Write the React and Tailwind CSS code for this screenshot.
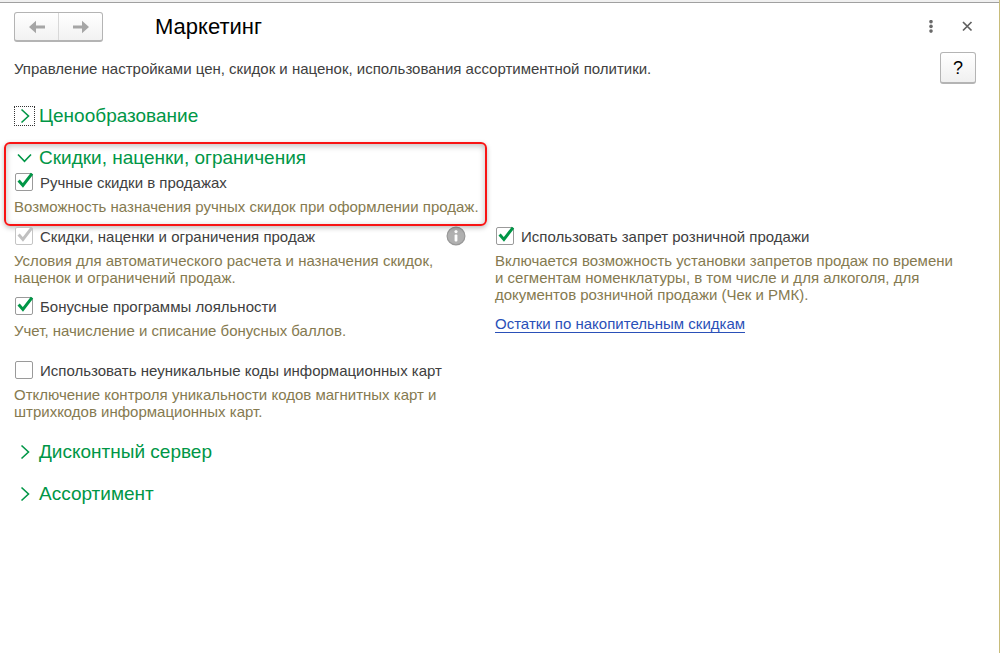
import React, { useState } from "react";

const Chevron = ({ open }) => (
  <svg width="21" height="20" viewBox="0 0 21 20" fill="none" stroke="#009646" strokeWidth="1.6" className="shrink-0">
    {open ? <path d="M4 6.5l6.5 6.8L17 6.5" /> : <path d="M7.5 3.5l7 6.5-7 6.5" />}
  </svg>
);

function SectionTitle({ title, open, focused, onClick }) {
  return (
    <h2>
      <button
        type="button"
        aria-expanded={open}
        onClick={onClick}
        className="flex h-6 items-center gap-1 text-[19px] leading-6 text-[#009646]"
      >
        <span className={focused ? "outline-1 outline-dotted outline-[#333] -outline-offset-1" : ""}>
          <Chevron open={open} />
        </span>
        {title}
      </button>
    </h2>
  );
}

function Option({ id, label, hint, checked, disabled, info, onChange }) {
  return (
    <div>
      <div className="flex h-5 items-center">
        <span className="relative ml-px h-[18px] w-[18px] shrink-0">
          <input
            id={id}
            type="checkbox"
            checked={checked}
            disabled={disabled}
            onChange={onChange}
            className="block h-[18px] w-[18px] appearance-none rounded-xs border border-[#9a9a9a] bg-white disabled:border-[#c4c4c4]"
          />
          {checked && (
            <svg
              width="18"
              height="18"
              viewBox="0 0 18 18"
              className="pointer-events-none absolute inset-0 overflow-visible"
              fill="none"
              stroke={disabled ? "#c0c0c0" : "#009646"}
              strokeWidth="3"
            >
              <path d="M3.6 7.6l4.3 4.8L17 0.6" />
            </svg>
          )}
        </span>
        <label htmlFor={id} className="ml-[7px]">{label}</label>
        {info && (
          <button type="button" aria-label="Подробнее" className="mr-[29px] ml-auto">
            <svg width="20" height="20" viewBox="0 0 20 20">
              <circle cx="10" cy="10" r="8.9" fill="#b0b0b0" stroke="#989898" strokeWidth="1.2" />
              <circle cx="10" cy="5.6" r="1.6" fill="#fff" />
              <rect x="8.6" y="8.4" width="2.8" height="7.2" rx="1" fill="#fff" />
            </svg>
          </button>
        )}
      </div>
      <p className="mt-[6px] pr-3 text-[#857a50]">{hint}</p>
    </div>
  );
}

export default function App() {
  const [sections, setSections] = useState({ pricing: false, discounts: true, server: false, range: false });
  const [options, setOptions] = useState({ manual: true, rules: true, bonus: true, codes: false, ban: true });

  const toggleSection = (name) => setSections((prev) => ({ ...prev, [name]: !prev[name] }));
  const toggleOption = (name) => setOptions((prev) => ({ ...prev, [name]: !prev[name] }));

  return (
    <div className="min-h-screen border-r border-[#c8bc7a] bg-white font-['Liberation_Sans',Arial,sans-serif] text-[15px] leading-[17px] text-[#404040]">
      <div className="h-[3px] border-b border-[#a0a0a0] bg-[#f0f0f0]" />
      <div className="pt-[9px] pr-[23px] pb-6 pl-[14px]">
        <header className="flex items-center">
          <div className="flex h-[30px] w-[89px] rounded-[3px] border border-b-2 border-[#b4b4b4] bg-linear-to-b from-white to-[#f2f2f2]">
            <button type="button" aria-label="Назад" className="flex flex-1 items-center justify-center border-r border-[#d8d8d8]">
              <svg width="18" height="14" viewBox="0 0 18 14" fill="#a6a6a6">
                <path d="M1 7l7-6.300v4.800h9v3H8v4.800z" />
              </svg>
            </button>
            <button type="button" aria-label="Вперед" className="flex flex-1 items-center justify-center">
              <svg width="18" height="14" viewBox="0 0 18 14" fill="#a6a6a6">
                <path d="M17 7l-7-6.300v4.800H1v3h9v4.800z" />
              </svg>
            </button>
          </div>
          <h1 className="ml-[52px] text-[22px] leading-7 text-black">Маркетинг</h1>
          <div className="ml-auto flex items-center gap-[18px]">
            <button type="button" aria-label="Меню" className="p-1">
              <svg width="10" height="14" viewBox="0 0 10 14" fill="#6a6a6a">
                <circle cx="5" cy="1.700" r="1.8" />
                <circle cx="5" cy="6.400" r="1.8" />
                <circle cx="5" cy="11.100" r="1.8" />
              </svg>
            </button>
            <button type="button" aria-label="Закрыть" className="p-[3px]">
              <svg width="12" height="12" viewBox="0 0 12 12" fill="none" stroke="#606060" strokeWidth="1.7">
                <path d="M2 1l8.500 8.500M10.500 1L2 9.500" />
              </svg>
            </button>
          </div>
        </header>

        <div className="mt-[10px] flex items-center justify-between">
          <p>Управление настройками цен, скидок и наценок, использования ассортиментной политики.</p>
          <button
            type="button"
            aria-label="Справка"
            className="h-8 w-9 rounded-[3px] border border-b-2 border-[#b4b4b4] bg-linear-to-b from-white to-[#f0f0f0] text-lg leading-7 text-black"
          >
            ?
          </button>
        </div>

        <div className="mt-5">
          <SectionTitle title="Ценообразование" open={sections.pricing} focused onClick={() => toggleSection("pricing")} />
        </div>

        <section className="mt-[18px]">
          <div className="grid grid-cols-2">
            <div className="relative">
              <SectionTitle
                title="Скидки, наценки, ограничения"
                open={sections.discounts}
                onClick={() => toggleSection("discounts")}
              />
              {sections.discounts && (
                <div className="mt-[2px]">
                  <Option
                    id="manual"
                    label="Ручные скидки в продажах"
                    hint="Возможность назначения ручных скидок при оформлении продаж."
                    checked={options.manual}
                    onChange={() => toggleOption("manual")}
                  />
                </div>
              )}
              {/* red frame round the manual discounts */}
              <div className="pointer-events-none absolute -top-1 right-2 -bottom-[11px] -left-[10px] rounded-md border-2 border-[#f81414] shadow-[0_2px_5px_rgba(0,0,0,0.25),inset_0_2px_6px_rgba(0,0,0,0.25)]" />
            </div>
          </div>

          {sections.discounts && (
            <div className="mt-[11px] grid grid-cols-2">
              <div>
                <Option
                  id="rules"
                  label="Скидки, наценки и ограничения продаж"
                  hint="Условия для автоматического расчета и назначения скидок, наценок и ограничений продаж."
                  checked={options.rules}
                  disabled
                  info
                />
                <div className="mt-[10px]">
                  <Option
                    id="bonus"
                    label="Бонусные программы лояльности"
                    hint="Учет, начисление и списание бонусных баллов."
                    checked={options.bonus}
                    onChange={() => toggleOption("bonus")}
                  />
                </div>
                <div className="mt-[21px]">
                  <Option
                    id="codes"
                    label="Использовать неуникальные коды информационных карт"
                    hint="Отключение контроля уникальности кодов магнитных карт и штрихкодов информационных карт."
                    checked={options.codes}
                    onChange={() => toggleOption("codes")}
                  />
                </div>
              </div>
              <div>
                <Option
                  id="ban"
                  label="Использовать запрет розничной продажи"
                  hint="Включается возможность установки запретов продаж по времени и сегментам номенклатуры, в том числе и для алкоголя, для документов розничной продажи (Чек и РМК)."
                  checked={options.ban}
                  onChange={() => toggleOption("ban")}
                />
                <a href="#balances" className="mt-3 inline-block border-b border-[#2a50b8] text-[#2a50b8]">
                  Остатки по накопительным скидкам
                </a>
              </div>
            </div>
          )}
        </section>

        <div className="mt-5 space-y-[18px]">
          <SectionTitle title="Дисконтный сервер" open={sections.server} onClick={() => toggleSection("server")} />
          <SectionTitle title="Ассортимент" open={sections.range} onClick={() => toggleSection("range")} />
        </div>
      </div>
    </div>
  );
}
